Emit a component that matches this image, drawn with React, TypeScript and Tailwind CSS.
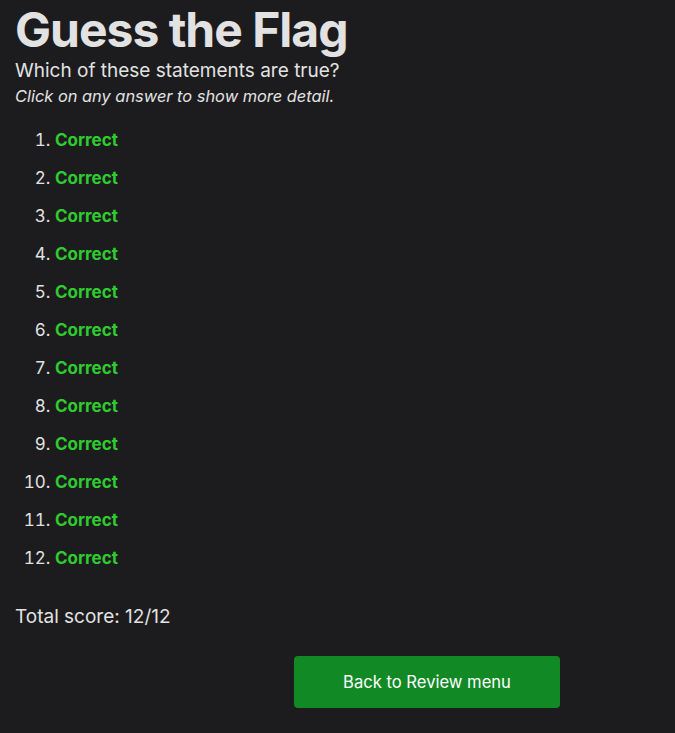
import React from "react";

export default function App() {
  const items = Array.from({ length: 12 }, (_, i) => i + 1);
  return (
    <div
      className="min-h-[733px] w-full bg-[#1c1c1e] text-[#e2e2e2] px-[15px]"
      style={{ fontFamily: "Inter, 'Noto Sans', sans-serif" }}
    >
      <h1 className="text-[48px] font-bold leading-[48px] pt-[6px] tracking-[-1px]">Guess the Flag</h1>
      <p className="text-[19px] leading-[26px] mt-[4px]">Which of these statements are true?</p>
      <p className="text-[16.4px] italic leading-[24px]">Click on any answer to show more detail.</p>
      <ol className="list-decimal pl-[40px] mt-[13px] text-[17px]">
        {items.map((n) => (
          <li key={n} className="leading-[38px] marker:text-[#e2e2e2]">
            <span className="font-bold text-[#2ecc2e]">Correct</span>
          </li>
        ))}
      </ol>
      <p className="text-[19px] leading-[26px] mt-[27px]">Total score: 12/12</p>
      <div className="mt-[26px] pl-[279px]">
        <button className="w-[266px] h-[52px] rounded-[4px] bg-[#118a26] text-white text-[16.6px]">
          Back to Review menu
        </button>
      </div>
    </div>
  );
}
